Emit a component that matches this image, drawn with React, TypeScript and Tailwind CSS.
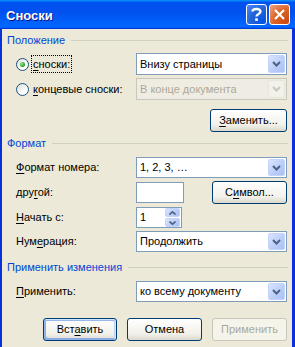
import React from "react";

const font = "font-['Tahoma','Liberation_Sans',Arial,sans-serif]";

const GroupHeader = ({ title }: { title: string }) => (
  <div className="flex items-center h-[13px] gap-[6px]">
    <span className="text-[#0046d5] whitespace-nowrap">{title}</span>
    <div className="flex-1 h-px bg-[#d0d0bf] mr-[-1px]" />
  </div>
);

const ArrowBox = ({ disabled }: { disabled?: boolean }) => (
  <svg width="9" height="6" viewBox="0 0 9 6">
    <polyline
      points="1,1 4.5,4.5 8,1"
      fill="none"
      stroke={disabled ? "#c9c7ba" : "#4d6185"}
      strokeWidth="2"
    />
  </svg>
);

const Combo = ({ value, disabled, tall }: { value: string; disabled?: boolean; tall?: boolean }) => (
  <div
    className={`${tall ? "h-[22px]" : "h-[21px]"} flex items-center border ${
      disabled
        ? "border-[#c9c7ba] bg-[#efede3] text-[#aca899]"
        : "border-[#7f9db9] bg-white text-black"
    }`}
  >
    <span className="flex-1 pl-[3px] truncate">{value}</span>
    <div
      className={`w-[17px] ${tall ? "h-[18px]" : "h-[17px]"} mr-px flex items-center justify-center rounded-[2px] border ${
        disabled
          ? "border-[#e8e6da] bg-[#f3f2ea]"
          : "border-[#c3d3fd] bg-[linear-gradient(135deg,#dae4fd,#b9cdf8_60%,#a9c0f5)]"
      }`}
    >
      <ArrowBox disabled={disabled} />
    </div>
  </div>
);

const Btn = ({
  children,
  def,
  disabled,
  className = "",
}: {
  children: React.ReactNode;
  def?: boolean;
  disabled?: boolean;
  className?: string;
}) => (
  <div
    className={`h-[23px] flex items-center justify-center rounded-[3px] border ${
      disabled
        ? "border-[#c9c7ba] bg-[#f5f4ea] text-[#aca899]"
        : "border-[#003c74] bg-[linear-gradient(180deg,#ffffff,#f2f1ea_70%,#dcd8cc)] text-black"
    } ${
      def
        ? "shadow-[inset_-1px_1px_#cee7ff,inset_1px_2px_#98b8ea,inset_-2px_2px_#bcd4f6,inset_1px_-1px_#89ade4,inset_2px_-2px_#89ade4]"
        : ""
    } ${className}`}
  >
    {children}
  </div>
);

const Row = ({ label, children }: { label: React.ReactNode; children: React.ReactNode }) => (
  <div className="flex items-center">
    <div className="w-[129px] pl-[9px] whitespace-nowrap">{label}</div>
    <div className="flex-1">{children}</div>
  </div>
);

const U = ({ children }: { children: React.ReactNode }) => (
  <span className="underline underline-offset-2">{children}</span>
);

const Radio = ({ checked }: { checked?: boolean }) => (
  <div className="w-[13px] h-[13px] rounded-full border border-[#1c5180] bg-[linear-gradient(135deg,#dcdcd5,#ffffff_70%)] flex items-center justify-center">
    {checked && (
      <div className="w-[5px] h-[5px] rounded-full bg-[radial-gradient(circle_at_35%_35%,#8ce78a,#21a121_70%)]" />
    )}
  </div>
);

const Spin = ({ up }: { up?: boolean }) => (
  <div className="flex-1 rounded-[2px] border border-[#c3d3fd] bg-[linear-gradient(135deg,#dae4fd,#b9cdf8_60%,#a9c0f5)] flex items-center justify-center">
    <svg width="7" height="4" viewBox="0 0 7 4">
      <polyline
        points={up ? "0.5,3.5 3.5,0.8 6.5,3.5" : "0.5,0.5 3.5,3.2 6.5,0.5"}
        fill="none"
        stroke="#4d6185"
        strokeWidth="1.6"
      />
    </svg>
  </div>
);

export default function App() {
  return (
    <div
      className={`w-[295px] h-[347px] flex flex-col bg-[#0831d9] text-[11px] leading-[13px] ${font}`}
    >
      <div className="h-[29px] flex items-center pl-[6px] pr-[5px] bg-[linear-gradient(180deg,#0997ff,#0053ee_8%,#0050ee_40%,#0066ff_88%,#0066ff_93%,#005bff_95%,#003dd7_96%,#003dd7)]">
        <span className="flex-1 text-white font-bold text-[13px] [text-shadow:1px_1px_#0f1089] font-['Liberation_Sans',Arial,sans-serif] mt-[1px]">
          Сноски
        </span>
        <div className="flex gap-[2px]">
          <div className="w-[21px] h-[21px] rounded-[3px] border border-white bg-[radial-gradient(circle_at_90%_90%,#0054e9,#2263d5_55%,#4480f7_90%)] flex items-center justify-center">
            <svg width="13" height="15" viewBox="0 0 13 15">
              <path d="M2.5 4.5 C2.5 1.5 10.5 1 10.5 4.5 C10.5 7 6.5 7 6.5 9.5" fill="none" stroke="white" strokeWidth="2.4" />
              <rect x="5.2" y="11.3" width="2.6" height="2.6" fill="white" />
            </svg>
          </div>
          <div className="w-[21px] h-[21px] rounded-[3px] border border-white bg-[radial-gradient(circle_at_90%_90%,#cc4614,#dc6527_55%,#e79877_90%)] flex items-center justify-center">
            <svg width="13" height="13" viewBox="0 0 13 13">
              <path d="M2 2 L11 11 M11 2 L2 11" stroke="white" strokeWidth="2.2" />
            </svg>
          </div>
        </div>
      </div>

      <div className="flex-1 ml-[2px] mr-[3px] bg-[#ece9d8] pl-[5px] pr-[5px] pt-[5px] flex flex-col text-black">
        <GroupHeader title="Положение" />

        <div className="mt-[6px] flex flex-col gap-[3px]">
          <div className="flex items-center">
            <div className="w-[129px] pl-[9px] flex items-center">
              <Radio checked />
              <span className="ml-[3px] px-px py-[1px] outline-1 outline-dotted outline-black outline-offset-0 leading-[14px]">
                <U>с</U>носки:
              </span>
            </div>
            <div className="flex-1">
              <Combo value="Внизу страницы" tall />
            </div>
          </div>
          <div className="flex items-center">
            <div className="w-[129px] pl-[9px] flex items-center whitespace-nowrap">
              <Radio />
              <span className="ml-[4px]">
                <U>к</U>онцевые сноски:
              </span>
            </div>
            <div className="flex-1">
              <Combo value="В конце документа" disabled tall />
            </div>
          </div>
        </div>

        <div className="mt-[9px] flex justify-end">
          <Btn className="w-[77px]">
            <span>
              <U>З</U>аменить...
            </span>
          </Btn>
        </div>

        <div className="mt-[5px]">
          <GroupHeader title="Формат" />
        </div>

        <div className="mt-[7px] flex flex-col gap-[3px]">
          <Row label={<><U>Ф</U>ормат номера:</>}>
            <Combo value="1, 2, 3, …" />
          </Row>
          <Row
            label={
              <>
                дру<U>г</U>ой:
              </>
            }
          >
            <div className="flex items-center">
              <div className="w-[48px] h-[21px] border border-[#7f9db9] bg-white" />
              <div className="flex-1" />
              <Btn className="w-[75px]">
                <span>
                  С<U>и</U>мвол...
                </span>
              </Btn>
            </div>
          </Row>
          <Row label={<><U>Н</U>ачать с:</>}>
            <div className="w-[46px] h-[21px] border border-[#7f9db9] bg-white flex items-center">
              <span className="flex-1 pl-[3px]">1</span>
              <div className="w-[15px] h-[19px] mr-px flex flex-col gap-px">
                <Spin up />
                <Spin />
              </div>
            </div>
          </Row>
          <Row
            label={
              <>
                Нум<U>е</U>рация:
              </>
            }
          >
            <Combo value="Продолжить" />
          </Row>
        </div>

        <div className="mt-[9px]">
          <GroupHeader title="Применить изменения" />
        </div>

        <div className="mt-[7px]">
          <Row label={<><U>П</U>рименить:</>}>
            <Combo value="ко всему документу" />
          </Row>
        </div>

        <div className="mt-[16px] flex justify-end gap-[10px]">
          <Btn def className="w-[74px]">
            <span>
              Вст<U>а</U>вить
            </span>
          </Btn>
          <Btn className="w-[75px]">Отмена</Btn>
          <Btn disabled className="w-[75px]">
            Применить
          </Btn>
        </div>
      </div>
    </div>
  );
}
